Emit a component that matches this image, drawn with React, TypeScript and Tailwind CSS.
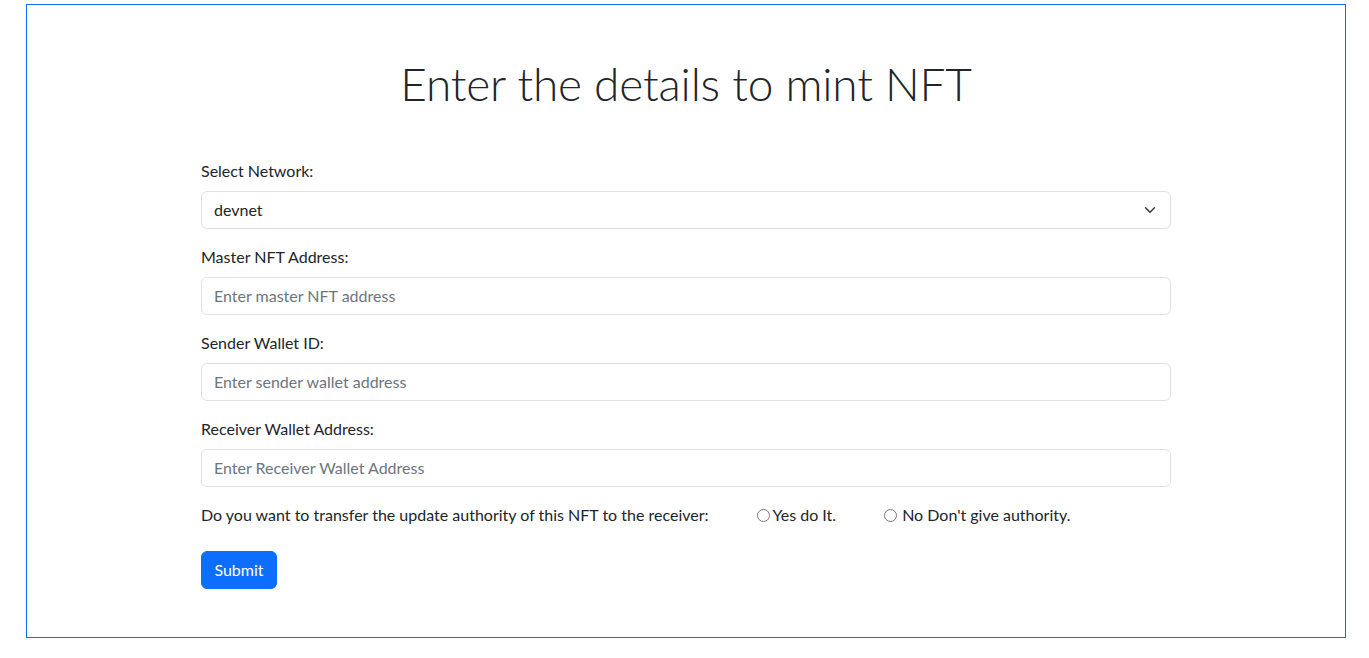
import React from "react";

const Chevron = () => (
  <svg width="16" height="12" viewBox="0 0 16 16" fill="none" className="shrink-0">
    <path d="m2 5 6 6 6-6" stroke="#343a40" strokeWidth="2" strokeLinecap="round" strokeLinejoin="round" />
  </svg>
);

const Radio = () => (
  <span className="inline-block w-[13px] h-[13px] rounded-full border border-[#767676] bg-white shrink-0" />
);

const Field = ({ label, placeholder }: { label: string; placeholder: string }) => (
  <div className="mb-4">
    <div className="h-6 leading-6 mb-2">{label}</div>
    <div className="h-[38px] rounded-[6px] border border-[#dee2e6] px-3 flex items-center text-[#6c757d]">
      {placeholder}
    </div>
  </div>
);

export default function App() {
  return (
    <div className="min-h-[658px] bg-white text-[#212529] text-[16px] font-['Lato','Liberation_Sans',sans-serif]">
      <div className="ml-[26px] mt-[4px] w-[1320px] border border-[#0d6efd] pt-[50px] pb-[48px]">
        <h1 className="text-center text-[46px] tracking-[-0.2px] leading-[58px] font-light h-[58px]">
          Enter the details to mint NFT
        </h1>
        <div className="w-[970px] mx-auto mt-[46px]">
          <div className="mb-4">
            <div className="h-6 leading-6 mb-2">Select Network:</div>
            <div className="h-[38px] rounded-[6px] border border-[#dee2e6] pl-3 pr-3 flex items-center justify-between">
              <span>devnet</span>
              <Chevron />
            </div>
          </div>
          <Field label="Master NFT Address:" placeholder="Enter master NFT address" />
          <Field label="Sender Wallet ID:" placeholder="Enter sender wallet address" />
          <Field label="Receiver Wallet Address:" placeholder="Enter Receiver Wallet Address" />
          <div className="h-6 leading-6 flex items-center">
            <span>Do you want to transfer the update authority of this NFT to the receiver:</span>
            <span className="ml-[48px] flex items-center gap-[3px]">
              <Radio />
              <span>Yes do It.</span>
            </span>
            <span className="ml-[48px] flex items-center gap-[5px]">
              <Radio />
              <span>No Don't give authority.</span>
            </span>
          </div>
          <button className="mt-6 h-[38px] w-[76px] rounded-[6px] bg-[#0d6efd] text-white border border-[#0d6efd]">
            Submit
          </button>
        </div>
      </div>
    </div>
  );
}
